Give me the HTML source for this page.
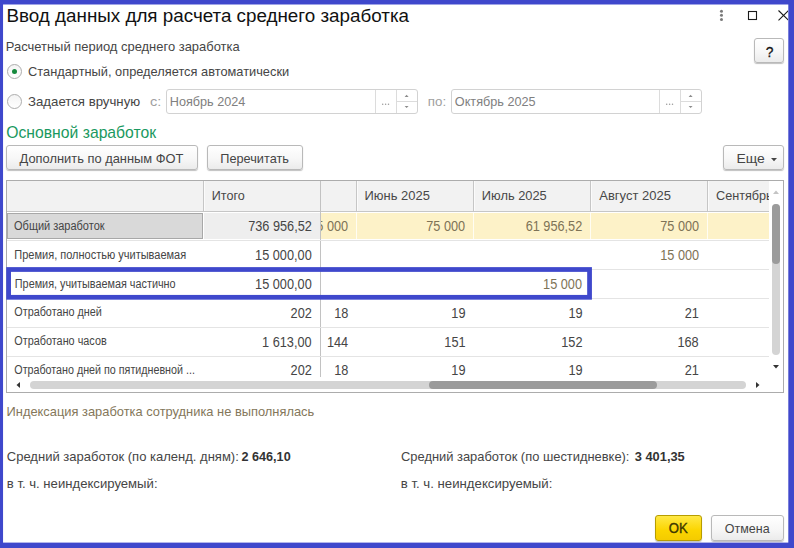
<!DOCTYPE html>
<html><head><meta charset="utf-8">
<style>
*{box-sizing:border-box;margin:0;padding:0}
html,body{width:794px;height:548px;overflow:hidden;background:#3f48cc}
body{font-family:"Liberation Sans",sans-serif;font-size:13px;color:#333;position:relative}
.t{position:absolute;white-space:nowrap;line-height:1}
.b{position:absolute;display:block}
.btn{position:absolute;border:1px solid #b9b9b9;border-radius:3px;background:linear-gradient(#ffffff,#f7f7f7 55%,#ebebeb);box-shadow:0 1px 1px rgba(0,0,0,.25)}
.inp{position:absolute;border:1px solid #d2d2d2;border-radius:3px;background:#fff}
</style></head><body>
<svg class="b" style="left:0;top:0;width:794px;height:548px" viewBox="0 0 794 548"><rect x="3.05" y="4.5" width="785.25" height="538.1" fill="#fff"/></svg>

<div class="t" id="title" style="left:0;top:7px;font-size:18.7px;color:#111;transform:translate(6.49px,0) scaleX(1.0064);transform-origin:0 0;">Ввод данных для расчета среднего заработка</div>
<svg class="b" style="left:710px;top:4px;width:78.3px;height:24px;overflow:hidden" viewBox="710 4 78.3 24">
<circle cx="721.5" cy="11.2" r="1.5" fill="#7a7a7a"/><circle cx="721.5" cy="15.3" r="1.5" fill="#7a7a7a"/><circle cx="721.5" cy="19.4" r="1.5" fill="#7a7a7a"/>
<rect x="748.5" y="11.5" width="8" height="8" fill="none" stroke="#1a1a1a" stroke-width="1.1"/>
<path d="M778.5 10.5 L788.5 20.3 M788.5 10.5 L778.5 20.3" stroke="#1a1a1a" stroke-width="1.1" fill="none"/>
</svg>
<div class="t" id="lbl1" style="left:0;top:40px;font-size:13.45px;color:#454545;transform:translate(5.78px,0) scaleX(0.9636);transform-origin:0 0;">Расчетный период среднего заработка</div>
<div class="btn" style="left:754px;top:38px;width:30px;height:25px"></div>
<div class="t" id="q" style="left:0;top:45px;font-size:14.8px;color:#111;transform:translate(765.75px,0) scaleX(0.9331);transform-origin:0 0;-webkit-text-stroke:0.3px #111;">?</div>
<div class="b" style="left:7px;top:64px;width:15px;height:15px;border:1px solid #adadad;border-radius:50%;background:linear-gradient(#f4f4f4,#fff)"></div>
<div class="b" style="left:12px;top:69px;width:5px;height:5px;border-radius:50%;background:#168a3e"></div>
<div class="t" id="r1" style="left:0;top:65px;font-size:13.45px;color:#454545;transform:translate(28.03px,0) scaleX(0.9534);transform-origin:0 0;">Стандартный, определяется автоматически</div>
<div class="b" style="left:7px;top:94px;width:15px;height:15px;border:1px solid #adadad;border-radius:50%;background:linear-gradient(#f4f4f4,#fff)"></div>
<div class="t" id="r2" style="left:0;top:95px;font-size:13.45px;color:#454545;transform:translate(28.01px,0) scaleX(0.9832);transform-origin:0 0;">Задается вручную</div>
<div class="t" id="s" style="left:0;top:95px;font-size:13.45px;color:#a0a0a0;transform:translate(149.95px,0) scaleX(1.0811);transform-origin:0 0;">с:</div>
<div class="inp" style="left:166px;top:89px;width:252px;height:25px"></div>
<div class="t" id="in1" style="left:0;top:95px;font-size:13.45px;color:#808080;transform:translate(169.80px,0) scaleX(0.9412);transform-origin:0 0;">Ноябрь 2024</div>
<div class="b" style="left:375px;top:90px;width:1px;height:23px;background:#dcdcdc;"></div>
<div class="b" style="left:396px;top:90px;width:1px;height:23px;background:#dcdcdc;"></div>
<div class="b" style="left:397px;top:101px;width:20px;height:1px;background:#dcdcdc;"></div>
<svg class="b" style="left:376px;top:90px;width:20px;height:23px" viewBox="0 0 20 23"><circle cx="6.7" cy="14.3" r="0.75" fill="#9a9a9a"/><circle cx="9.6" cy="14.3" r="0.75" fill="#9a9a9a"/><circle cx="12.5" cy="14.3" r="0.75" fill="#9a9a9a"/></svg>
<svg class="b" style="left:397px;top:90px;width:20px;height:23px" viewBox="0 0 20 23"><path d="M7.6 7 L9.6 4.8 L11.6 7Z M7.6 15.9 L9.6 18.1 L11.6 15.9Z" fill="#8c8c8c"/></svg>
<div class="t" id="po" style="left:0;top:95px;font-size:13.45px;color:#a0a0a0;transform:translate(427.76px,0) scaleX(0.9914);transform-origin:0 0;">по:</div>
<div class="inp" style="left:451px;top:89px;width:251px;height:25px"></div>
<div class="t" id="in2" style="left:0;top:95px;font-size:13.45px;color:#808080;transform:translate(454.79px,0) scaleX(0.9426);transform-origin:0 0;">Октябрь 2025</div>
<div class="b" style="left:659px;top:90px;width:1px;height:23px;background:#dcdcdc;"></div>
<div class="b" style="left:680px;top:90px;width:1px;height:23px;background:#dcdcdc;"></div>
<div class="b" style="left:681px;top:101px;width:20px;height:1px;background:#dcdcdc;"></div>
<svg class="b" style="left:660px;top:90px;width:20px;height:23px" viewBox="0 0 20 23"><circle cx="6.7" cy="14.3" r="0.75" fill="#9a9a9a"/><circle cx="9.6" cy="14.3" r="0.75" fill="#9a9a9a"/><circle cx="12.5" cy="14.3" r="0.75" fill="#9a9a9a"/></svg>
<svg class="b" style="left:681px;top:90px;width:20px;height:23px" viewBox="0 0 20 23"><path d="M7.6 7 L9.6 4.8 L11.6 7Z M7.6 15.9 L9.6 18.1 L11.6 15.9Z" fill="#8c8c8c"/></svg>
<div class="t" id="osn" style="left:0;top:125px;font-size:15.9px;color:#1a9960;transform:translate(6.26px,0) scaleX(0.9891);transform-origin:0 0;">Основной заработок</div>
<div class="btn" style="left:6px;top:145px;width:192px;height:25px"></div>
<div class="t" id="b1" style="left:0;top:152px;font-size:13.45px;color:#454545;transform:translate(19.51px,0) scaleX(0.9590);transform-origin:0 0;">Дополнить по данным ФОТ</div>
<div class="btn" style="left:207px;top:145px;width:96px;height:25px"></div>
<div class="t" id="b2" style="left:0;top:152px;font-size:13.45px;color:#454545;transform:translate(220.30px,0) scaleX(0.9465);transform-origin:0 0;">Перечитать</div>
<div class="btn" style="left:723px;top:145px;width:61px;height:25px"></div>
<div class="t" id="b3" style="left:0;top:152px;font-size:13.45px;color:#454545;transform:translate(736.46px,0) scaleX(1.0368);transform-origin:0 0;">Еще</div>
<svg class="b" style="left:770px;top:157px;width:8px;height:5px" viewBox="0 0 8 5"><path d="M1 1 L7 1 L4 4.2Z" fill="#444"/></svg>
<div class="b" style="left:6px;top:180px;width:778px;height:213px;border:1px solid #acacac;background:#fff"></div>
<div class="b" style="left:7px;top:181px;width:762px;height:30px;background:#f2f2f2;"></div>
<div class="b" style="left:7px;top:211px;width:762px;height:1px;background:#c6c6c6;"></div>
<div class="b" style="left:203px;top:181px;width:1px;height:31px;background:#c6c6c6;"></div>
<div class="b" style="left:204px;top:181px;width:1px;height:30px;background:#fbfbfb;"></div>
<div class="b" style="left:356px;top:181px;width:1px;height:31px;background:#c6c6c6;"></div>
<div class="b" style="left:357px;top:181px;width:1px;height:30px;background:#fbfbfb;"></div>
<div class="b" style="left:473px;top:181px;width:1px;height:31px;background:#c6c6c6;"></div>
<div class="b" style="left:474px;top:181px;width:1px;height:30px;background:#fbfbfb;"></div>
<div class="b" style="left:590px;top:181px;width:1px;height:31px;background:#c6c6c6;"></div>
<div class="b" style="left:591px;top:181px;width:1px;height:30px;background:#fbfbfb;"></div>
<div class="b" style="left:707px;top:181px;width:1px;height:31px;background:#c6c6c6;"></div>
<div class="b" style="left:708px;top:181px;width:1px;height:30px;background:#fbfbfb;"></div>
<div class="b" style="left:320px;top:181px;width:1px;height:196px;background:#c2c2c2;"></div>
<div class="t" id="h0" style="left:0;top:189px;font-size:13.4px;color:#484848;transform:translate(211.80px,0) scaleX(0.9381);transform-origin:0 0;">Итого</div>
<div class="t" id="h1" style="left:0;top:189px;font-size:13.4px;color:#484848;transform:translate(364.53px,0) scaleX(0.9667);transform-origin:0 0;">Июнь 2025</div>
<div class="t" id="h2" style="left:0;top:189px;font-size:13.4px;color:#484848;transform:translate(481.79px,0) scaleX(0.9599);transform-origin:0 0;">Июль 2025</div>
<div class="t" id="h3" style="left:0;top:189px;font-size:13.4px;color:#484848;transform:translate(599.25px,0) scaleX(0.9707);transform-origin:0 0;">Август 2025</div>
<div class="b" style="left:716px;top:186px;width:53px;height:20px;overflow:hidden"><div class="t" id="h4" style="left:0.3px;top:3px;font-size:13.4px;color:#484848;transform:scaleX(0.945);transform-origin:0 0">Сентябрь 2025</div></div>
<div class="b" style="left:7px;top:213px;width:196px;height:26px;background:#d9d9d9;border:1.5px solid #a8a8a8"></div>
<div class="b" style="left:204px;top:213px;width:116px;height:26px;background:#eeeeee;"></div>
<div class="b" style="left:321px;top:213px;width:448px;height:26px;background:#fdf2c8;"></div>
<div class="b" style="left:356px;top:213px;width:1px;height:26px;background:#fffdf3;"></div>
<div class="b" style="left:473px;top:213px;width:1px;height:26px;background:#fffdf3;"></div>
<div class="b" style="left:590px;top:213px;width:1px;height:26px;background:#fffdf3;"></div>
<div class="b" style="left:707px;top:213px;width:1px;height:26px;background:#fffdf3;"></div>
<div class="b" style="left:7px;top:240px;width:762px;height:1px;background:#e4e4e4;"></div>
<div class="b" style="left:7px;top:269px;width:762px;height:1px;background:#e4e4e4;"></div>
<div class="b" style="left:7px;top:298px;width:762px;height:1px;background:#e4e4e4;"></div>
<div class="b" style="left:7px;top:327px;width:762px;height:1px;background:#e4e4e4;"></div>
<div class="b" style="left:7px;top:356px;width:762px;height:1px;background:#e4e4e4;"></div>
<div class="t" id="l1" style="left:0;top:220px;font-size:12px;color:#454545;transform:translate(14.05px,0) scaleX(0.9150);transform-origin:0 0;">Общий заработок</div>
<div class="t" id="l2" style="left:0;top:249px;font-size:12px;color:#454545;transform:translate(14.32px,0) scaleX(0.9167);transform-origin:0 0;">Премия, полностью учитываемая</div>
<div class="t" id="l3" style="left:0;top:278px;font-size:12px;color:#454545;transform:translate(14.84px,0) scaleX(0.9020);transform-origin:0 0;">Премия, учитываемая частично</div>
<div class="t" id="l4" style="left:0;top:306px;font-size:12px;color:#454545;transform:translate(14.29px,0) scaleX(0.9010);transform-origin:0 0;">Отработано дней</div>
<div class="t" id="l5" style="left:0;top:335px;font-size:12px;color:#454545;transform:translate(14.29px,0) scaleX(0.9037);transform-origin:0 0;">Отработано часов</div>
<div class="t" id="l6" style="left:0;top:364px;font-size:12px;color:#454545;transform:translate(14.30px,0) scaleX(0.8932);transform-origin:0 0;">Отработано дней по пятидневной ...</div>
<div class="t" id="N0" style="left:0;top:219px;font-size:14px;color:#454545;transform:translate(248.16px,0) scaleX(0.9091);transform-origin:0 0;">736 956,52</div>
<div class="t" id="R1" style="left:0;top:248px;font-size:14px;color:#454545;transform:translate(255.10px,0) scaleX(0.9091);transform-origin:0 0;">15 000,00</div>
<div class="t" id="R2" style="left:0;top:277px;font-size:14px;color:#454545;transform:translate(255.10px,0) scaleX(0.9091);transform-origin:0 0;">15 000,00</div>
<div class="t" id="R3" style="left:0;top:306px;font-size:14px;color:#454545;transform:translate(290.60px,0) scaleX(0.9091);transform-origin:0 0;">202</div>
<div class="t" id="R4" style="left:0;top:335px;font-size:14px;color:#454545;transform:translate(262.10px,0) scaleX(0.9091);transform-origin:0 0;">1 613,00</div>
<div class="t" id="R5" style="left:0;top:363px;font-size:14px;color:#454545;transform:translate(290.60px,0) scaleX(0.9091);transform-origin:0 0;">202</div>
<div class="b" style="left:321px;top:213px;width:40px;height:26px;overflow:hidden"><div style="position:absolute;left:-321px;top:-213px;width:794px;height:548px">
<div class="t" id="R6" style="left:0;top:219px;font-size:14px;color:#7e7356;transform:translate(309.20px,0) scaleX(0.9091);transform-origin:0 0;">75 000</div>
</div></div>
<div class="t" id="R7" style="left:0;top:306px;font-size:14px;color:#454545;transform:translate(334.15px,0) scaleX(0.9091);transform-origin:0 0;">18</div>
<div class="t" id="R8" style="left:0;top:335px;font-size:14px;color:#454545;transform:translate(326.90px,0) scaleX(0.9091);transform-origin:0 0;">144</div>
<div class="t" id="R9" style="left:0;top:363px;font-size:14px;color:#454545;transform:translate(334.15px,0) scaleX(0.9091);transform-origin:0 0;">18</div>
<div class="t" id="R10" style="left:0;top:219px;font-size:14px;color:#7e7356;transform:translate(426.20px,0) scaleX(0.9091);transform-origin:0 0;">75 000</div>
<div class="t" id="R11" style="left:0;top:306px;font-size:14px;color:#454545;transform:translate(451.30px,0) scaleX(0.9091);transform-origin:0 0;">19</div>
<div class="t" id="R12" style="left:0;top:335px;font-size:14px;color:#454545;transform:translate(444.30px,0) scaleX(0.9091);transform-origin:0 0;">151</div>
<div class="t" id="R13" style="left:0;top:363px;font-size:14px;color:#454545;transform:translate(451.30px,0) scaleX(0.9091);transform-origin:0 0;">19</div>
<div class="t" id="R14" style="left:0;top:219px;font-size:14px;color:#7e7356;transform:translate(525.65px,0) scaleX(0.9091);transform-origin:0 0;">61 956,52</div>
<div class="t" id="R15" style="left:0;top:277px;font-size:14px;color:#7e7356;transform:translate(543.05px,0) scaleX(0.9091);transform-origin:0 0;">15 000</div>
<div class="t" id="R16" style="left:0;top:306px;font-size:14px;color:#454545;transform:translate(568.50px,0) scaleX(0.9091);transform-origin:0 0;">19</div>
<div class="t" id="R17" style="left:0;top:335px;font-size:14px;color:#454545;transform:translate(561.25px,0) scaleX(0.9091);transform-origin:0 0;">152</div>
<div class="t" id="R18" style="left:0;top:363px;font-size:14px;color:#454545;transform:translate(568.50px,0) scaleX(0.9091);transform-origin:0 0;">19</div>
<div class="t" id="R19" style="left:0;top:219px;font-size:14px;color:#7e7356;transform:translate(660.20px,0) scaleX(0.9091);transform-origin:0 0;">75 000</div>
<div class="t" id="R20" style="left:0;top:248px;font-size:14px;color:#7e7356;transform:translate(660.20px,0) scaleX(0.9091);transform-origin:0 0;">15 000</div>
<div class="t" id="R21" style="left:0;top:306px;font-size:14px;color:#454545;transform:translate(684.65px,0) scaleX(0.9091);transform-origin:0 0;">21</div>
<div class="t" id="R22" style="left:0;top:335px;font-size:14px;color:#454545;transform:translate(677.40px,0) scaleX(0.9091);transform-origin:0 0;">168</div>
<div class="t" id="R23" style="left:0;top:363px;font-size:14px;color:#454545;transform:translate(684.65px,0) scaleX(0.9091);transform-origin:0 0;">21</div>
<svg class="b" style="left:0;top:260px;width:600px;height:48px" viewBox="0 260 600 48"><rect x="8.6" y="269.5" width="580.95" height="27.8" fill="none" stroke="#3f48cc" stroke-width="4.75"/></svg>
<div class="b" style="left:7px;top:378px;width:776px;height:14px;background:#fff;"></div>
<div class="b" style="left:30px;top:381px;width:716px;height:8px;background:#d4d4d4;border-radius:4px"></div>
<div class="b" style="left:429px;top:381px;width:228px;height:8px;background:#9b9b9b;border-radius:4px"></div>
<svg class="b" style="left:15px;top:380px;width:8px;height:10px" viewBox="0 0 8 10"><path d="M5 2 L5 8 L1.5 5Z" fill="#333"/></svg>
<svg class="b" style="left:753px;top:380px;width:8px;height:10px" viewBox="0 0 8 10"><path d="M3 2 L3 8 L6.5 5Z" fill="#333"/></svg>
<div class="b" style="left:769px;top:181px;width:14px;height:197px;background:#fff;"></div>
<div class="b" style="left:772px;top:204px;width:8px;height:151px;background:#d4d4d4;border-radius:4px"></div>
<div class="b" style="left:772px;top:204px;width:8px;height:60px;background:#9b9b9b;border-radius:4px"></div>
<svg class="b" style="left:771px;top:188px;width:10px;height:8px" viewBox="0 0 10 8"><path d="M2 6 L8 6 L5 2.5Z" fill="#c4c4c4"/></svg>
<svg class="b" style="left:771px;top:363px;width:10px;height:8px" viewBox="0 0 10 8"><path d="M2 2 L8 2 L5 5.5Z" fill="#333"/></svg>
<div class="t" id="idx" style="left:0;top:405px;font-size:13.45px;color:#84775a;transform:translate(6.54px,0) scaleX(0.9579);transform-origin:0 0;">Индексация заработка сотрудника не выполнялась</div>
<div class="t" id="s1" style="left:0;top:450px;font-size:13.45px;color:#454545;transform:translate(6.77px,0) scaleX(0.9687);transform-origin:0 0;">Средний заработок (по календ. дням):</div>
<div class="t" id="v1" style="left:0;top:450px;font-size:13.2px;color:#333;transform:translate(241.51px,0) scaleX(0.9575);transform-origin:0 0;font-weight:bold;">2 646,10</div>
<div class="t" id="s2" style="left:0;top:450px;font-size:13.45px;color:#454545;transform:translate(401.03px,0) scaleX(0.9594);transform-origin:0 0;">Средний заработок (по шестидневке):</div>
<div class="t" id="v2" style="left:0;top:450px;font-size:13.2px;color:#333;transform:translate(634.76px,0) scaleX(0.9735);transform-origin:0 0;font-weight:bold;">3 401,35</div>
<div class="t" id="n1" style="left:0;top:477px;font-size:13.45px;color:#454545;transform:translate(6.77px,0) scaleX(0.9767);transform-origin:0 0;">в т. ч. неиндексируемый:</div>
<div class="t" id="n2" style="left:0;top:477px;font-size:13.45px;color:#454545;transform:translate(400.76px,0) scaleX(0.9823);transform-origin:0 0;">в т. ч. неиндексируемый:</div>
<div class="btn" style="left:655px;top:515px;width:47px;height:26px;background:linear-gradient(#ffe845,#fbd500 60%,#f4cb00);border-color:#b79d00"></div>
<div class="t" id="ok" style="left:0;top:522px;font-size:13.8px;color:#3f3800;transform:translate(668.76px,0) scaleX(0.9533);transform-origin:0 0;-webkit-text-stroke:0.35px #3f3800;">OK</div>
<div class="btn" style="left:711px;top:515px;width:73px;height:26px"></div>
<div class="t" id="cancel" style="left:0;top:522px;font-size:13px;color:#454545;transform:translate(724.77px,0) scaleX(0.9610);transform-origin:0 0;">Отмена</div>
</body></html>
